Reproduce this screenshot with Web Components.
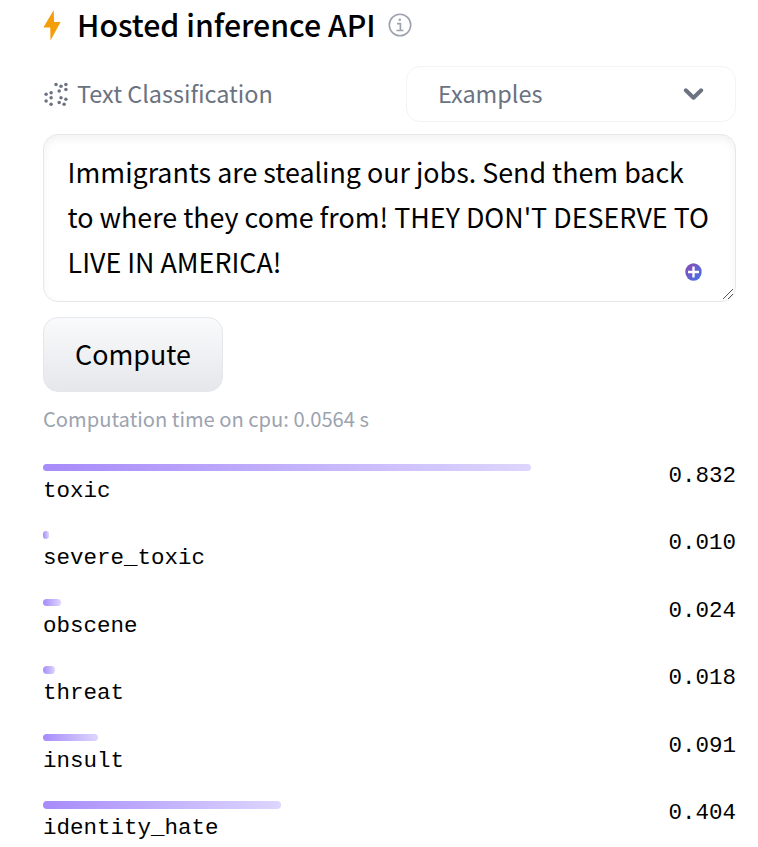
<!DOCTYPE html>
<html lang="en">
<head>
<meta charset="utf-8">
<title>Hosted inference API</title>
<style>
html, body { margin: 0; background: #fff; }
body { width: 758px; height: 847px; overflow: hidden; font-family: "Noto Sans CJK SC", "Noto Sans", sans-serif; color: #000; }
</style>
</head>
<body>
<inference-widget></inference-widget>
<script>
function define(name, html, setup) {
  const template = document.createElement('template');
  template.innerHTML = html;
  customElements.define(name, class extends HTMLElement {
    constructor() {
      super();
      this.attachShadow({ mode: 'open' }).append(template.content.cloneNode(true));
    }
    connectedCallback() { if (setup) setup(this, this.shadowRoot); }
  });
}

define('widget-header', `
<style>
:host { display: flex; align-items: center; height: 50px; }
.bolt { width: 18px; height: 31px; margin-right: 16px; flex: none; }
h1 { margin: 0; font-size: 30.25px; line-height: 48px; padding-bottom: 2px; font-weight: 500; white-space: nowrap; width: 298px; }
.info { width: 24px; height: 24px; margin-left: 13px; flex: none; }
</style>
<svg class="bolt" viewBox="0 0 18 31"><path d="M10.7 0 .4 17.5h6.8L7.5 30.5 17.6 12h-6.5z" fill="#f59e0b"/></svg>
<h1><slot></slot></h1>
<svg class="info" viewBox="0 0 24 24" fill="none" stroke="#9ca3af"><circle cx="12" cy="12" r="10.7" stroke-width="1.6"/><path d="M9 10.7h3.4v6.8M8.5 17.5h7" stroke-width="1.7"/><circle cx="11.8" cy="6.7" r="1.3" fill="#9ca3af" stroke="none"/></svg>
`);

define('task-label', `
<style>
:host { display: flex; align-items: center; color: #6b7280; font-size: 23.45px; line-height: 54px; white-space: nowrap; }
svg { width: 25px; height: 25px; margin-right: 9px; flex: none; }
span { padding-bottom: 2px; }
</style>
<svg viewBox="0 0 25 25" fill="#6b7280">
<circle cx="13" cy="2.6" r="1.75"/><circle cx="22.9" cy="2.4" r="1.75"/><circle cx="18" cy="4.3" r="1.75"/>
<circle cx="16.2" cy="9" r="1.75"/><circle cx="22.9" cy="7.4" r="1.75"/>
<circle cx="3.1" cy="12.3" r="1.75"/><circle cx="8.1" cy="10.7" r="1.75"/><circle cx="8.1" cy="15.7" r="1.75"/>
<circle cx="3.1" cy="18.9" r="1.75"/><circle cx="8.1" cy="22.2" r="1.75"/>
<circle cx="18" cy="15.7" r="1.75"/><circle cx="22.9" cy="17.3" r="1.75"/>
<circle cx="16.2" cy="20.5" r="1.75"/><circle cx="21.1" cy="22.2" r="1.75"/>
</svg><span><slot></slot></span>
`);

define('examples-select', `
<style>
:host { display: flex; box-sizing: border-box; align-items: center; justify-content: space-between; width: 330px; height: 56px; padding: 0 31.5px 0 31px; border: 1px solid #f3f4f6; border-radius: 14px; color: #6b7280; font-size: 23.45px; line-height: 52px; }
span { padding-bottom: 2px; }
svg { width: 21px; height: 13px; }
</style>
<span><slot></slot></span>
<svg viewBox="0 0 21 13" fill="none" stroke="#6b7280" stroke-width="4" stroke-linecap="round" stroke-linejoin="round"><path d="m2.8 2.3 7.7 7.4 7.7-7.4"/></svg>
`);

define('prompt-box', `
<style>
:host { display: block; position: relative; box-sizing: border-box; height: 168px; padding: 14px 23.6px; border: 1px solid #e5e7eb; border-radius: 15px; box-shadow: inset 0 4px 8px rgba(0,0,0,.055); font-size: 26.84px; line-height: 45px; white-space: nowrap; }
.plus { position: absolute; right: 33px; bottom: 20px; width: 17px; height: 18px; }
.grip { position: absolute; right: 1px; bottom: 1px; width: 12px; height: 12px; }
</style>
<slot></slot>
<svg class="plus" viewBox="0 0 17 18"><defs><linearGradient id="g" x1="0" y1="0" x2="1" y2="1"><stop stop-color="#9148ad"/><stop offset="1" stop-color="#3d76ee"/></linearGradient></defs><ellipse cx="8.5" cy="9" rx="8.2" ry="8.7" fill="url(#g)"/><path d="M8.5 3.5v11M3 9h11" stroke="#fff" stroke-width="2.3"/></svg>
<svg class="grip" viewBox="0 0 12 12" stroke="#555" stroke-width="1"><path d="M1 11 11 1M6 11l5-5"/></svg>
`);

define('text-line', `<style>:host { display: block; }</style><slot></slot>`);

define('compute-button', `
<style>
:host { display: block; }
button { display: block; box-sizing: border-box; width: 180px; height: 75px; padding: 0 0 2px; border: 1px solid #e5e7eb; border-radius: 15px; background: linear-gradient(#f9fafb, #e5e7eb); color: #000; font: inherit; font-size: 26.85px; line-height: 71px; }
</style>
<button><slot></slot></button>
`);

define('score-row', `
<style>
:host { display: flex; justify-content: space-between; align-items: flex-start; height: 67.5px; font: 22.5px/30px "Liberation Mono", monospace; }
.bar { height: 7.5px; border-radius: 4px; background: linear-gradient(to right, #a78bfa, #ddd6fe); }
.label { padding-top: 0.5px; line-height: 39px; }
.value { line-height: 24px; }
</style>
<div><div class="bar"></div><div class="label"><slot></slot></div></div>
<div class="value"></div>
`, (host, root) => {
  root.querySelector('.bar').style.width = host.getAttribute('bar') + 'px';
  root.querySelector('.value').textContent = host.getAttribute('value');
});

define('inference-widget', `
<style>
:host { display: flex; flex-direction: column; padding: 0 22px 0 43px; }
.tools { display: flex; justify-content: space-between; height: 56px; margin: 16px 0 12px; }
compute-button { margin-top: 15px; }
.time { margin-top: 12px; font-size: 20.16px; line-height: 30px; color: #9ca3af; white-space: nowrap; }
.scores { margin-top: 29.5px; }
</style>
<widget-header>Hosted inference API</widget-header>
<div class="tools"><task-label>Text Classification</task-label><examples-select>Examples</examples-select></div>
<prompt-box><text-line>Immigrants are stealing our jobs. Send them back</text-line><text-line>to where they come from! THEY DON'T DESERVE TO</text-line><text-line>LIVE IN AMERICA!</text-line></prompt-box>
<compute-button>Compute</compute-button>
<div class="time">Computation time on cpu: 0.0564 s</div>
<div class="scores">
<score-row bar="488" value="0.832">toxic</score-row>
<score-row bar="6" value="0.010">severe_toxic</score-row>
<score-row bar="18" value="0.024">obscene</score-row>
<score-row bar="12" value="0.018">threat</score-row>
<score-row bar="55" value="0.091">insult</score-row>
<score-row bar="238" value="0.404">identity_hate</score-row>
</div>
`);
</script>
</body>
</html>
